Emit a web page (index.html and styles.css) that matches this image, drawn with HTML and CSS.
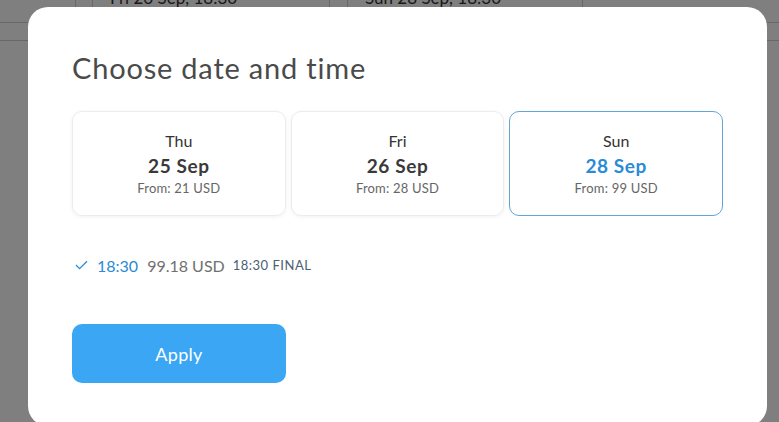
FILE: index.html
```html
<!DOCTYPE html>
<html>
<head>
<meta charset="utf-8">
<link rel="stylesheet" href="styles.css">
</head>
<body>
<div class="page">
  <div class="row row-top">
    <div class="cell c1"></div>
    <div class="cell c2"></div>
    <div class="cell c3"><span class="bg-text">Fri 26 Sep, 18:30</span></div>
    <div class="cell c4"></div>
    <div class="cell c5"><span class="bg-text">Sun 28 Sep, 18:30</span></div>
    <div class="cell c6"></div>
  </div>
  <div class="row row-second"></div>
</div>
<div class="overlay"></div>
<div class="modal">
  <h1 class="title">Choose date and time</h1>
  <div class="cards">
    <div class="card">
      <div class="day">Thu</div>
      <div class="date">25 Sep</div>
      <div class="from">From: 21 USD</div>
    </div>
    <div class="card">
      <div class="day">Fri</div>
      <div class="date">26 Sep</div>
      <div class="from">From: 28 USD</div>
    </div>
    <div class="card selected">
      <div class="day">Sun</div>
      <div class="date">28 Sep</div>
      <div class="from">From: 99 USD</div>
    </div>
  </div>
  <div class="option">
    <svg class="check" width="13" height="10" viewBox="0 0 13 10"><path d="M1 5 L4.6 8.6 L12 1.2" fill="none" stroke="#2a8bd6" stroke-width="1.3"/></svg>
    <span class="time">18:30</span>
    <span class="price">99.18 USD</span>
    <span class="label">18:30 FINAL</span>
  </div>
  <button class="apply">Apply</button>
</div>
</body>
</html>
```
FILE: styles.css
```css
html, body {
  margin: 0;
  padding: 0;
  height: 100%;
  overflow: hidden;
}
body {
  background: #fff;
  font-family: "Lato", "Liberation Sans", sans-serif;
}
.page {
  width: 100%;
}
.row {
  display: flex;
  border-bottom: 1px solid #cfcfcf;
}
.row-top {
  height: 22px;
}
.row-second {
  height: 17px;
}
.cell {
  border-right: 1px solid #cfcfcf;
  overflow: hidden;
  box-sizing: border-box;
}
.c1 { width: 76px; }
.c2 { width: 17px; }
.c3 { width: 237px; padding-left: 17px; }
.c4 { width: 18px; }
.c5 { width: 235px; padding-left: 17px; }
.c6 { flex: 1; border-right: none; }
.bg-text {
  display: block;
  font-size: 17px;
  line-height: 17px;
  margin-top: -11px;
  color: #333;
  white-space: nowrap;
}
.overlay {
  position: fixed;
  inset: 0;
  background: rgba(0, 0, 0, 0.5);
}
.modal {
  position: absolute;
  top: 7px;
  left: 28px;
  width: 739px;
  height: 419px;
  box-sizing: border-box;
  background: #fff;
  border-radius: 20px;
  padding: 44px 44px 0 44px;
}
.title {
  margin: 0;
  font-size: 29px;
  line-height: 34px;
  font-weight: 400;
  letter-spacing: 0.8px;
  color: #4a4a4a;
}
.cards {
  display: flex;
  gap: 5px;
  margin-top: 26px;
  width: 651px;
}
.card {
  flex: 1;
  height: 105px;
  box-sizing: border-box;
  border: 1px solid #ececec;
  border-radius: 10px;
  box-shadow: 0 1px 4px rgba(0, 0, 0, 0.06);
  display: flex;
  flex-direction: column;
  align-items: center;
  padding-top: 19px;
}
.card.selected {
  border-color: #5fa8d6;
  box-shadow: none;
}
.day {
  font-size: 16px;
  line-height: 20px;
  color: #333;
}
.date {
  font-size: 19px;
  line-height: 24px;
  font-weight: 700;
  letter-spacing: 0.6px;
  color: #3a3a3a;
  margin-top: 3px;
}
.selected .date {
  color: #2a8bd6;
}
.from {
  font-size: 13px;
  line-height: 16px;
  letter-spacing: 0.2px;
  color: #666;
  margin-top: 2px;
}
.option {
  display: flex;
  align-items: center;
  margin-top: 38px;
  height: 22px;
  padding-left: 3px;
}
.check {
  margin-right: 9px;
}
.time {
  font-size: 16px;
  color: #2a8bd6;
  margin-right: 9px;
}
.price {
  font-size: 16px;
  color: #707070;
  margin-right: 8px;
}
.label {
  font-size: 13px;
  letter-spacing: 0.5px;
  color: #4a6072;
}
.apply {
  display: block;
  margin-top: 48px;
  width: 214px;
  height: 59px;
  border: none;
  border-radius: 10px;
  background: #3aa6f4;
  color: #fff;
  font-family: "Lato", "Liberation Sans", sans-serif;
  font-size: 18px;
  letter-spacing: 0.3px;
  cursor: pointer;
}
```
